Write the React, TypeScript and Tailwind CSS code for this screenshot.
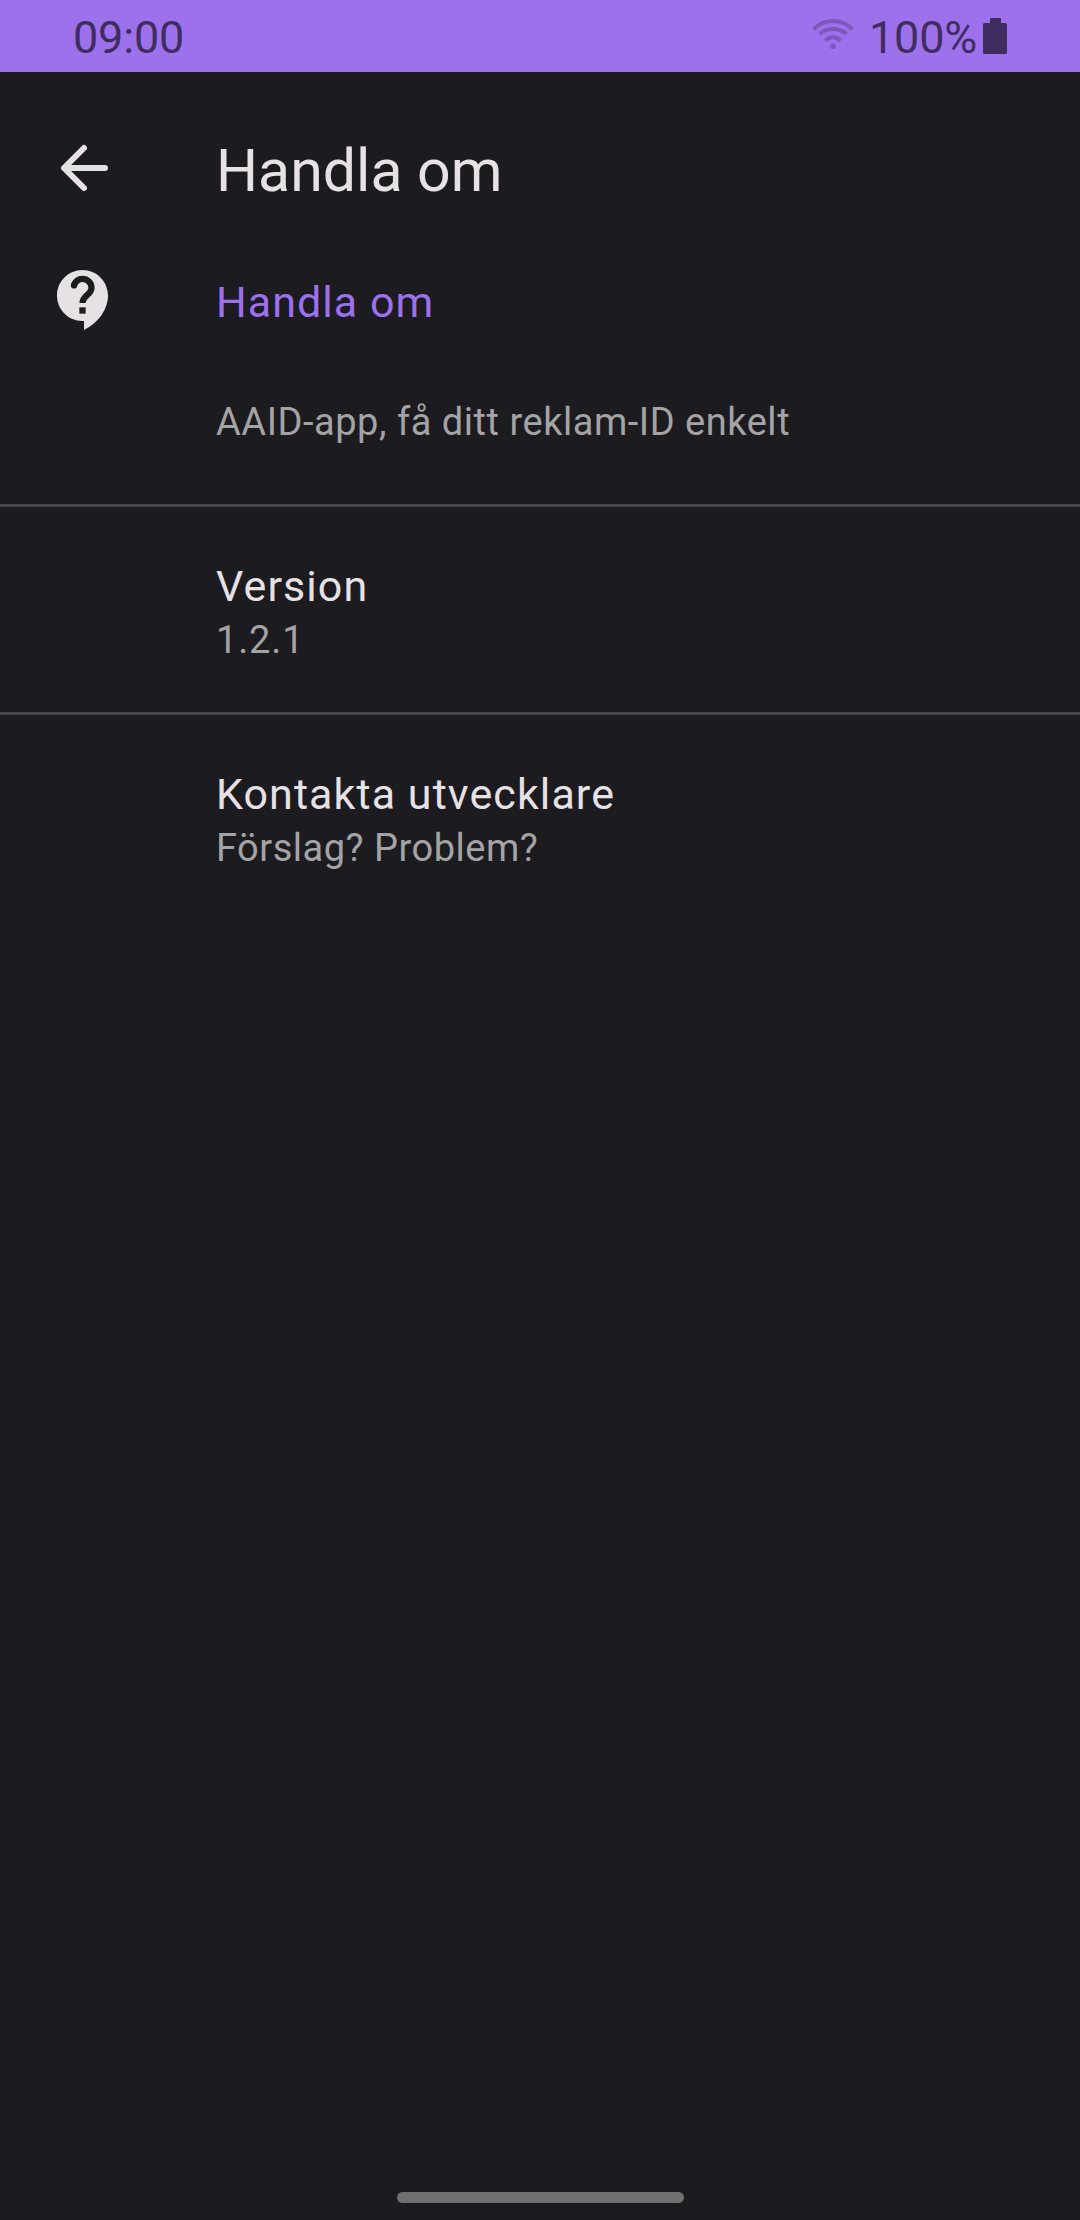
export default function App() {
  return (
    <div className="flex h-[2220px] w-[1080px] flex-col overflow-hidden bg-[#1c1b1f] font-['Roboto',sans-serif] text-[#e6e1e5]">
      <header className="flex h-[72px] shrink-0 items-center bg-[#9d70ec] pr-[73px] pl-[73px] text-[#3f2d5f]">
        <span className="grow pt-[3px] text-[45px] leading-[56px] tracking-[-0.2px]">09:00</span>
        <svg className="mr-[15px] mb-1 h-[31px] w-[42px] opacity-35" viewBox="0 0 42 31" fill="none" stroke="currentColor" strokeWidth="4">
          <path d="M1.5 10.3a27 27 0 0 1 39 0M7.5 15a20.7 20.7 0 0 1 27 0M13.2 21.6a10.9 10.9 0 0 1 15.6 0" />
          <circle cx="21" cy="27.3" r="2.8" fill="currentColor" stroke="none" />
        </svg>
        <span className="pt-[3px] text-[45px] leading-[56px] tracking-[-0.2px]">100%</span>
        <svg className="ml-[6px] h-[36px] w-[24px]" viewBox="0 0 24 36" fill="currentColor">
          <path d="M7 1q0-1 1-1h9q1 0 1 1v4h4.500q1.500 0 1.500 1.500v28q0 1.500-1.500 1.500h-21q-1.500 0-1.500-1.500v-28Q0 5 1.500 5H7z" />
        </svg>
      </header>
      <div className="flex h-[192px] shrink-0 items-center">
        <svg className="ml-[48px] h-[72px] w-[72px]" viewBox="0 0 72 72" fill="none" stroke="currentColor" strokeWidth="6" strokeLinecap="round" strokeLinejoin="round">
          <path d="M57 36H17M36 16L16 36l20 20" />
        </svg>
        <h1 className="ml-[96px] pt-[6px] text-[59px] leading-[70px]">Handla om</h1>
      </div>
      <div className="flex h-[72px] shrink-0 items-center">
        <svg className="ml-[48px] h-[72px] w-[72px]" viewBox="0 0 24 24">
          <path fill="currentColor" d="M11.5 2C6.810 2 3 5.810 3 10.500S6.810 19 11.500 19h.5v3c4.860-2.340 8-7 8-11.500C20 5.810 16.190 2 11.500 2z" />
          <path fill="none" stroke="#1c1b1f" strokeWidth="2.1" d="M8.620 7.200C9.100 5.850 10.150 4.970 11.500 4.970C13.200 4.970 14.500 6.250 14.500 7.900C14.500 10.300 11.500 10.500 11.500 13" />
          <circle cx="8.67" cy="7.15" r="1.05" fill="#1c1b1f" />
          <rect x="10.45" y="14.45" width="2.1" height="2.1" fill="#1c1b1f" />
        </svg>
        <h2 className="ml-[96px] pt-[4px] text-[43px] leading-[50px] tracking-[1.05px] text-[#9d70ec]">Handla om</h2>
      </div>
      <p className="h-[171px] shrink-0 border-b-[3px] border-[#49454f] pt-[62px] pl-[216px] text-[38px] leading-[48px] tracking-[0.53px] text-[#a4a3a5]">
        AAID-app, få ditt reklam-ID enkelt
      </p>
      <section className="h-[208px] shrink-0 border-b-[3px] border-[#49454f] pt-[52px] pl-[216px]">
        <h3 className="text-[43px] leading-[54px] tracking-[1.07px]">Version</h3>
        <p className="text-[38px] leading-[54px] tracking-[0.85px] text-[#a4a3a5]">1.2.1</p>
      </section>
      <section className="pt-[52px] pl-[216px]">
        <h3 className="text-[43px] leading-[54px] tracking-[1.09px]">Kontakta utvecklare</h3>
        <p className="text-[38px] leading-[54px] tracking-[0.51px] text-[#a4a3a5]">Förslag? Problem?</p>
      </section>
      <div className="mt-auto mb-[16.700px] h-[11.600px] w-[287px] self-center rounded-full bg-[#706f71]" />
    </div>
  );
}
